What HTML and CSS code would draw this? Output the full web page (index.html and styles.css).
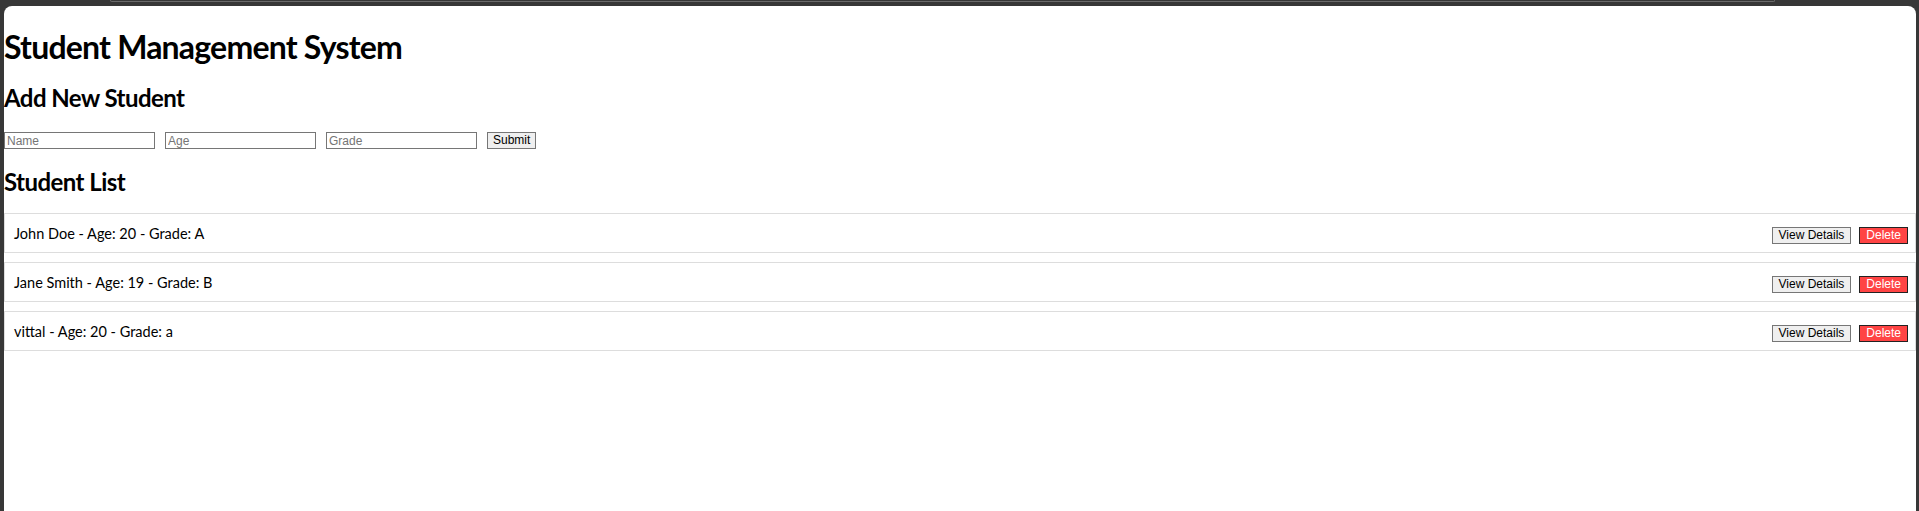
FILE: index.html
```html
<!DOCTYPE html>
<html lang="en">
<head>
<meta charset="utf-8">
<title>Student Management System</title>
<link rel="stylesheet" href="styles.css">
</head>
<body>
<div class="topbar"><div class="tabline"></div></div>
<div class="page">
  <h1 class="title">Student Management System</h1>
  <h2 class="section add-title">Add New Student</h2>
  <form class="student-form">
    <input class="field" type="text" placeholder="Name">
    <input class="field" type="text" placeholder="Age">
    <input class="field" type="text" placeholder="Grade">
    <button class="btn" type="button">Submit</button>
  </form>
  <h2 class="section list-title">Student List</h2>
  <ul class="student-list">
    <li class="student-item">
      <span class="student-text">John Doe - Age: 20 - Grade: A</span>
      <div class="actions">
        <button class="btn" type="button">View Details</button>
        <button class="btn btn-delete" type="button">Delete</button>
      </div>
    </li>
    <li class="student-item">
      <span class="student-text">Jane Smith - Age: 19 - Grade: B</span>
      <div class="actions">
        <button class="btn" type="button">View Details</button>
        <button class="btn btn-delete" type="button">Delete</button>
      </div>
    </li>
    <li class="student-item">
      <span class="student-text">vittal - Age: 20 - Grade: a</span>
      <div class="actions">
        <button class="btn" type="button">View Details</button>
        <button class="btn btn-delete" type="button">Delete</button>
      </div>
    </li>
  </ul>
</div>
</body>
</html>
```
FILE: styles.css
```css
html, body {
  margin: 0;
  height: 100%;
}
body {
  background: #373737;
  padding: 0 3px 0 4px;
  box-sizing: border-box;
  display: flex;
  flex-direction: column;
  font-family: Lato, "Liberation Sans", sans-serif;
  color: #000;
}
.topbar {
  height: 6px;
  flex: none;
}
.tabline {
  margin-left: 106px;
  width: 1663px;
  height: 1px;
  border-bottom: 1px solid #6a6a6a;
  border-left: 1px solid #6a6a6a;
  border-right: 1px solid #6a6a6a;
  border-radius: 0 0 4px 4px;
}
.page {
  flex: 1;
  background: #fff;
  border-radius: 8px 8px 0 0;
  display: flow-root;
}
.title {
  margin: 22px 0 0;
  font-size: 32px;
  line-height: 38px;
  font-weight: 700;
  letter-spacing: -0.8px;
}
.section {
  font-size: 24px;
  line-height: 29px;
  font-weight: 700;
  letter-spacing: -0.55px;
}
.add-title {
  margin: 17px 0 0;
}
.student-form {
  margin: 20px 0 0;
  display: flex;
  gap: 10px;
}
.field {
  width: 151px;
  height: 17px;
  box-sizing: border-box;
  margin: 0;
  padding: 0 2px;
  border: 1px solid #767676;
  border-radius: 0;
  font: 12px "Liberation Sans", Arial, sans-serif;
  color: #000;
  background: #fff;
}
.field::placeholder {
  color: #757575;
}
.list-title {
  margin: 18px 0 0;
}
.student-list {
  list-style: none;
  margin: 17px 0 0;
  padding: 0;
}
.student-item {
  height: 40px;
  box-sizing: border-box;
  border: 1px solid #ddd;
  margin-bottom: 9px;
  padding: 0 7px 0 9px;
  display: flex;
  align-items: center;
  justify-content: space-between;
}
.student-text {
  font-size: 14.5px;
  line-height: 19px;
  margin-top: 1px;
}
.actions {
  display: flex;
  gap: 8px;
  margin-top: 4px;
}
.btn {
  height: 17px;
  box-sizing: border-box;
  margin: 0;
  padding: 0 6px;
  border: 1px solid #767676;
  border-radius: 0;
  background: #efefef;
  color: #000;
  font: 12px "Liberation Sans", Arial, sans-serif;
  line-height: 15px;
}
.student-form .btn {
  padding: 0 5px;
}
.btn-delete {
  background: #ff4444;
  color: #fff;
  border-color: #222;
}
```
